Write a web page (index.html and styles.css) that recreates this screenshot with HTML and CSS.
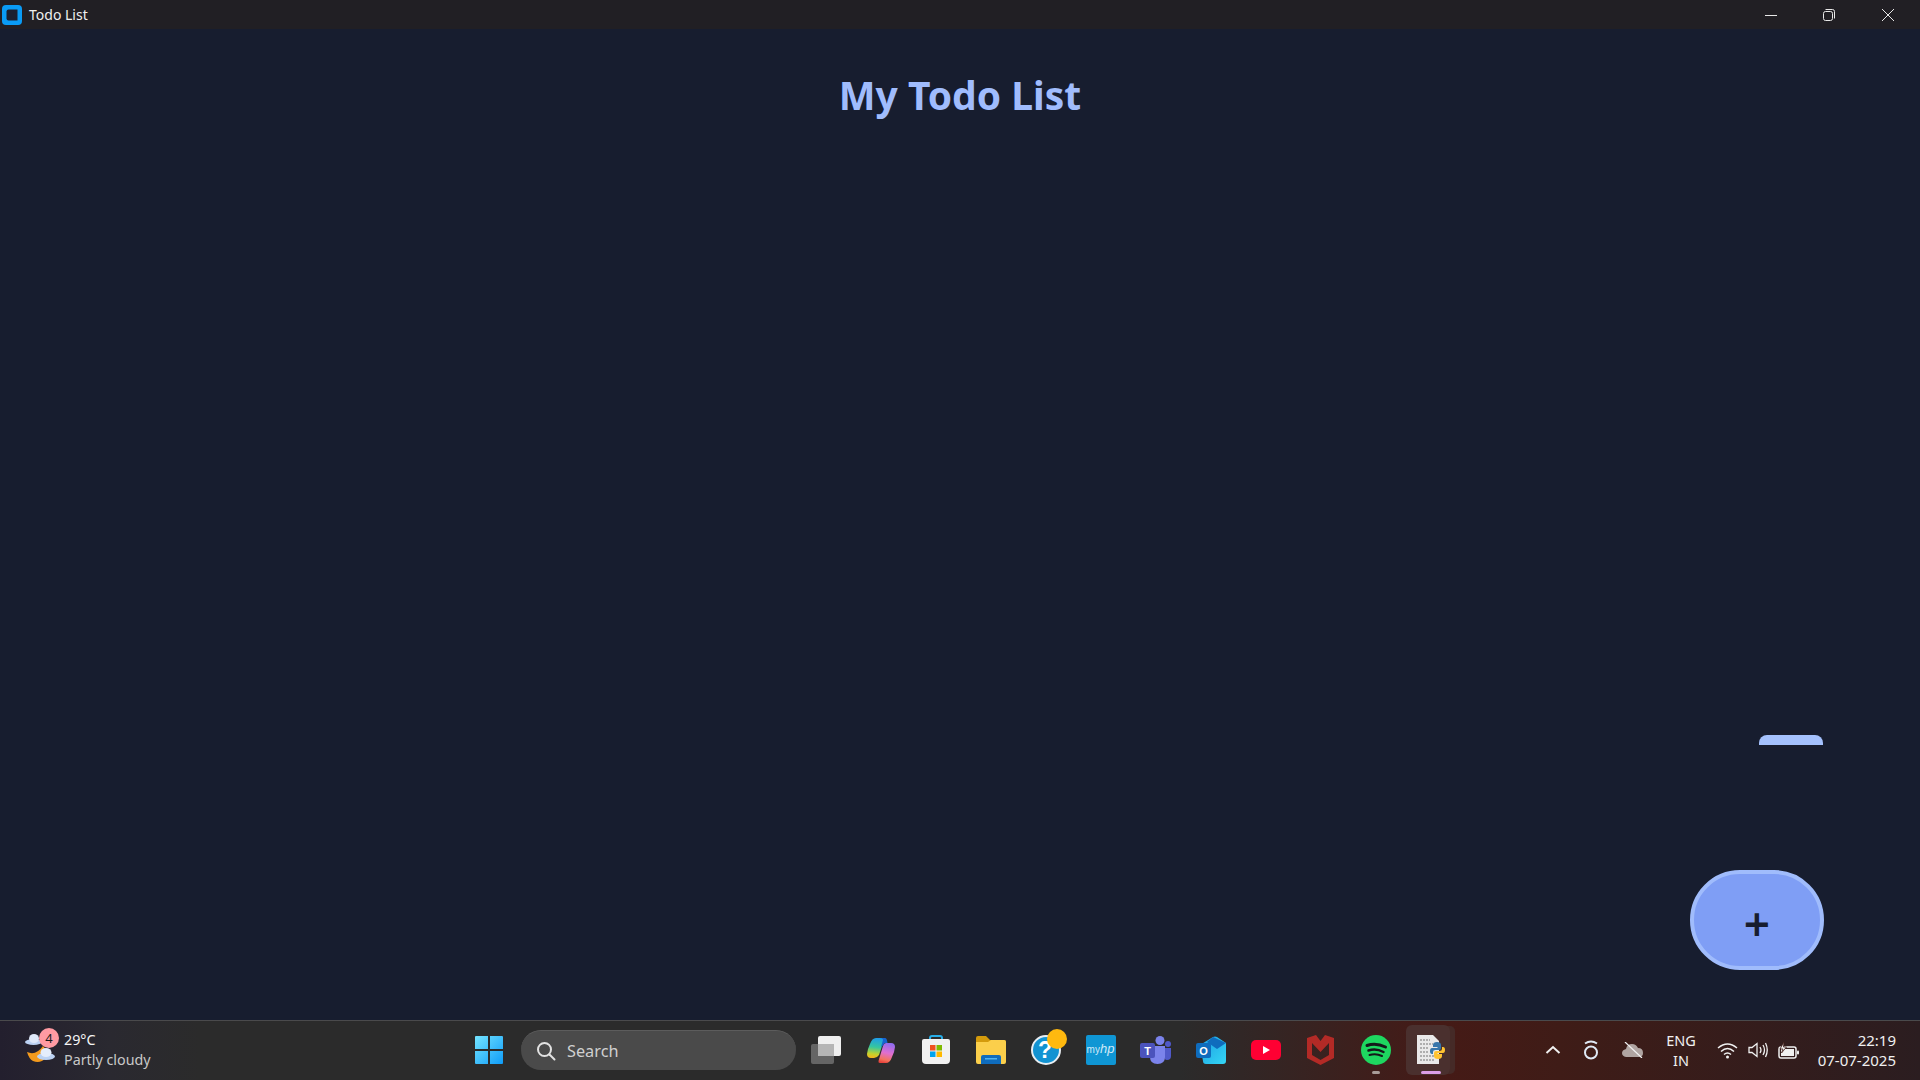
FILE: index.html
```html
<!DOCTYPE html>
<html lang="en">
<head>
<meta charset="utf-8">
<title>Todo List</title>
<link rel="stylesheet" href="styles.css">
</head>
<body>
<div class="window">
  <header class="titlebar">
    <div class="app-name">
      <svg class="app-icon" width="20" height="20" viewBox="0 0 20 20"><rect width="20" height="20" rx="4" fill="#0a9bf5"/><path d="M6.500 4.500H15.500V15.500H6.500Q4.500 15.500 4.500 13.500V6.500Q4.500 4.500 6.500 4.500Z" fill="#1c2030"/></svg>
      <span>Todo List</span>
    </div>
    <div class="win-controls">
      <button class="win-btn"><svg width="14" height="14" viewBox="0 0 14 14"><path d="M1 7.500H13" stroke="#e8e8e8" stroke-width="1"/></svg></button>
      <button class="win-btn"><svg width="14" height="14" viewBox="0 0 14 14" fill="none" stroke="#e8e8e8" stroke-width="1"><rect x="1.500" y="3.500" width="9" height="9" rx="2"/><path d="M3.500 1.500H10.500Q12.500 1.500 12.500 3.500V10.500"/></svg></button>
      <button class="win-btn"><svg width="14" height="14" viewBox="0 0 14 14"><path d="M1 1L13 13M13 1L1 13" stroke="#e8e8e8" stroke-width="1"/></svg></button>
    </div>
  </header>

  <main class="content">
    <h1 class="heading">My Todo List</h1>
    <div class="peek-tab"></div>
    <button class="fab">+</button>
  </main>

  <footer class="taskbar">
    <div class="weather">
      <div class="weather-icon">
        <svg width="34" height="36" viewBox="0 0 34 36">
          <path d="M3 20Q12 24 19 14Q25 20 22 26Q16 32 9 29Q5 27 3 20Z" fill="#f39a1d"/>
          <ellipse cx="9.500" cy="10" rx="8.500" ry="3" fill="#bcd2f3"/><ellipse cx="10" cy="6.500" rx="5" ry="4.500" fill="#dfe9fa"/>
          <ellipse cx="22" cy="24.500" rx="9" ry="3.500" fill="#bcd2f3"/><ellipse cx="22" cy="20.500" rx="5.500" ry="4.500" fill="#e5edfb"/>
        </svg>
        <span class="badge">4</span>
      </div>
      <div class="weather-text">
        <span class="temp">29°C</span>
        <span class="cond">Partly cloudy</span>
      </div>
    </div>

    <div class="center">
      <div class="slot">
        <svg width="30" height="30" viewBox="0 0 30 30">
          <defs>
            <linearGradient id="win" x1="0" y1="0" x2="1" y2="1"><stop offset="0" stop-color="#74e4ff"/><stop offset="1" stop-color="#0f9cf8"/></linearGradient>
          </defs>
          <path d="M1 2Q1 1 2 1H14V14H1ZM16 1H28Q29 1 29 2V14H16ZM1 16H14V29H2Q1 29 1 28ZM16 16H29V28Q29 29 28 29H16Z" fill="url(#win)"/>
        </svg>
      </div>
      <div class="search">
        <svg width="20" height="20" viewBox="0 0 20 20" fill="none" stroke="#e2e2e2" stroke-width="2"><circle cx="8.500" cy="8.500" r="6.500"/><path d="M13.500 13.500L18.500 18.500" stroke-linecap="round"/></svg>
        <span>Search</span>
      </div>
      <div class="slot">
        <svg width="32" height="30" viewBox="0 0 32 30"><rect x="8" y="1" width="23" height="20" rx="2" fill="#efefef"/><rect x="1" y="9" width="23" height="20" rx="2" fill="#707070" fill-opacity=".85"/><rect x="8" y="9" width="16" height="12" fill="#b5b5b5"/></svg>
      </div>
      <div class="slot">
        <svg width="28" height="25" viewBox="0 0 28 25">
          <defs>
            <linearGradient id="cop1" x1="0.500" y1="0" x2="0.400" y2="1"><stop offset="0" stop-color="#1f9ce8"/><stop offset=".45" stop-color="#35c6a0"/><stop offset=".8" stop-color="#c4d22c"/><stop offset="1" stop-color="#f6b51c"/></linearGradient>
            <linearGradient id="cop2" x1="0.600" y1="0" x2="0.400" y2="1"><stop offset="0" stop-color="#8f6cf0"/><stop offset=".5" stop-color="#e06fd0"/><stop offset=".85" stop-color="#f4735c"/><stop offset="1" stop-color="#e8433c"/></linearGradient>
          </defs>
          <path d="M9 0H15Q17.500 0 17 2L12 17Q10 20 7 20H4Q0 20 0 16Q.5 11 3 6Q5 0 9 0Z" fill="url(#cop1)"/>
          <path d="M13 0H18Q20 0 20.500 5H18Q17 5 16.500 7L14 9L16 2Q16 0 13 0Z" fill="#1763d0"/>
          <path d="M19 5H24Q28 5 28 9Q27.500 14 25 19Q23 25 19 25H13Q11 25 11.500 23L16 8Q17 5 19 5Z" fill="url(#cop2)"/>
        </svg>
      </div>
      <div class="slot">
        <svg width="30" height="30" viewBox="0 0 30 30">
          <path d="M9 6V3Q9 1 11 1H19Q21 1 21 3V6" fill="none" stroke="#27aee8" stroke-width="2"/>
          <path d="M1 6Q1 4 3 4H27Q29 4 29 6V25Q29 29 25 29H5Q1 29 1 25Z" fill="#f1f1f1"/>
          <rect x="9" y="10" width="5.500" height="5.500" fill="#f0511f"/><rect x="15.500" y="10" width="5.500" height="5.500" fill="#7fba00"/><rect x="9" y="16.500" width="5.500" height="5.500" fill="#00a4ef"/><rect x="15.500" y="16.500" width="5.500" height="5.500" fill="#ffb900"/>
        </svg>
      </div>
      <div class="slot">
        <svg width="30" height="28" viewBox="0 0 30 28">
          <path d="M0 2Q0 0 2 0H10L14 4H28Q30 4 30 6V8H0Z" fill="#d49b0c"/>
          <path d="M0 6H12L15 4H28Q30 4 30 6V26Q30 28 28 28H2Q0 28 0 26Z" fill="#fbcf4b"/>
          <path d="M5 28V21Q5 19 7 19H23Q25 19 25 21V28Z" fill="#0f6cbd"/><rect x="9" y="22" width="12" height="1.500" fill="#4fb4f2"/>
        </svg>
      </div>
      <div class="slot">
        <div class="help-wrap">
          <svg width="30" height="30" viewBox="0 0 30 30"><circle cx="15" cy="15" r="14" fill="#1293d2" stroke="#e8eef2" stroke-width="2"/><text x="14" y="23" text-anchor="middle" class="help-mark">?</text></svg>
          <span class="help-dot"></span>
        </div>
      </div>
      <div class="slot">
        <div class="myhp"><span class="my">my</span><span class="hp">hp</span></div>
      </div>
      <div class="slot">
        <svg width="32" height="28" viewBox="0 0 32 28">
          <circle cx="20" cy="4.500" r="4.500" fill="#7b83eb"/><circle cx="28" cy="8" r="3" fill="#5059c9"/>
          <path d="M24 12H31V20Q31 24 27 24Q24 24 24 20Z" fill="#5059c9"/>
          <path d="M10 10H25V21Q25 28 17.500 28Q10 28 10 21Z" fill="#7b83eb"/>
          <rect x="0" y="7" width="15" height="15" rx="2" fill="#4b53bc"/>
          <text x="7.500" y="19" text-anchor="middle" class="teams-t">T</text>
        </svg>
      </div>
      <div class="slot">
        <svg width="30" height="28" viewBox="0 0 30 28">
          <defs><linearGradient id="ol" x1="0" y1="0" x2="1" y2="1"><stop offset="0" stop-color="#1b9de2"/><stop offset="1" stop-color="#35d6f5"/></linearGradient></defs>
          <path d="M4 9L17 1Q19 0 21 1L30 7V25Q30 28 27 28H10Q7 28 7 25Z" fill="url(#ol)"/>
          <path d="M17 1L30 7L21 13L11 6Z" fill="#0f6cbd"/>
          <rect x="0" y="7" width="15" height="15" rx="2" fill="#0f6cbd"/>
          <text x="7.500" y="19" text-anchor="middle" class="teams-t">O</text>
        </svg>
      </div>
      <div class="slot">
        <svg width="30" height="20" viewBox="0 0 30 20"><rect width="30" height="20" rx="5" fill="#ff0033"/><path d="M12 6L19 10L12 14Z" fill="#fff"/></svg>
      </div>
      <div class="slot">
        <svg width="27" height="30" viewBox="0 0 27 30"><path fill-rule="evenodd" d="M0 3L9 0L13.500 6L18 0L27 3V23L13.500 30L0 23ZM5 8V20L13.500 25L22 20V8L13.500 17Z" fill="#b32a26"/></svg>
      </div>
      <div class="slot">
        <svg width="30" height="30" viewBox="0 0 30 30" fill="none" stroke="#14191a" stroke-linecap="round"><circle cx="15" cy="15" r="15" fill="#1ed760" stroke="none"/><path d="M6 10.500Q15 7.500 24.500 12" stroke-width="3"/><path d="M7.500 15.500Q15 13 22.500 17" stroke-width="2.500"/><path d="M8.500 20Q15 18 21 21" stroke-width="2"/></svg>
        <span class="run-dot"></span>
      </div>
      <div class="slot slot-active">
        <svg width="30" height="30" viewBox="0 0 30 30">
          <path d="M1 0H17L23 6V29H1Z" fill="#e9e9e9"/>
          <path d="M4 5H14M4 9H17M4 13H12M4 17H12M4 21H18M4 25H18" stroke="#9a9a9a" stroke-width="1.500" stroke-dasharray="2 1"/>
          <path d="M21 7Q17 7 17 10V12H21.500V13H16Q14 13 14 16Q14 19 16 19H17V17Q17 15 19.500 15H23Q25 15 25 13V10Q25 7 21 7Z" fill="#3776ab"/>
          <path d="M22 24Q26 24 26 21V19H21.500V18H27Q29 18 29 15Q29 12 27 12H26V14Q26 16 23.500 16H20Q18 16 18 18V21Q18 24 22 24Z" fill="#ffc331"/>
        </svg>
        <span class="run-bar"></span>
      </div>
    </div>

    <div class="tray">
      <svg class="tray-chevron" width="16" height="10" viewBox="0 0 16 10"><path d="M1.500 8L8 2L14.500 8" fill="none" stroke="#f0f0f0" stroke-width="2"/></svg>
      <svg class="tray-ring" width="16" height="20" viewBox="0 0 16 20" fill="none" stroke="#dfe9f5" stroke-width="2"><circle cx="8" cy="12.500" r="6"/><path d="M2 3.500Q8 -.5 14 3.500"/></svg>
      <svg class="tray-cloud" width="22" height="16" viewBox="0 0 22 16"><path d="M4 15Q0 14 0 11Q0 8 4 7Q5 2 10 2Q14 2 16 6Q21 6 21 11Q21 15 17 15Z" fill="#b0a5a2"/><path d="M3 0L20 16" stroke="#f2f2f2" stroke-width="1.200"/></svg>
      <div class="lang"><span>ENG</span><span>IN</span></div>
      <div class="tray-icons">
        <svg width="21" height="17" viewBox="0 0 21 17" fill="none" stroke="#f0f0f0" stroke-width="1.500"><path d="M1 6Q10.500 -2 20 6"/><path d="M4 9.500Q10.500 3.500 17 9.500"/><path d="M7 12.500Q10.500 9.500 14 12.500"/><circle cx="10.500" cy="15" r="1.500" fill="#f0f0f0" stroke="none"/></svg>
        <svg width="20" height="18" viewBox="0 0 20 18" fill="none" stroke="#f0f0f0" stroke-width="1.300"><path d="M1 6.500H4L9 2.500V15.500L4 11.500H1Z"/><path d="M12 6Q14 9 12 12"/><path d="M15 4Q18 9 15 14"/><path d="M17.500 2Q21 9 17.500 16" /></svg>
        <svg width="21" height="17" viewBox="0 0 21 17"><rect x="1" y="5" width="17" height="11" rx="2" fill="none" stroke="#f0f0f0" stroke-width="1.500"/><rect x="3" y="7" width="13" height="7" fill="#f0f0f0"/><rect x="19" y="8.500" width="2" height="4" rx="1" fill="#f0f0f0"/><path d="M6 0L2 7H5L3.500 11L8.500 5H5.500Z" fill="#f0f0f0" stroke="#3f1c17" stroke-width=".8"/></svg>
      </div>
      <div class="clock"><span>22:19</span><span>07-07-2025</span></div>
    </div>
  </footer>
</div>
</body>
</html>
```

FILE: styles.css
```css
* { box-sizing: border-box; }
html, body { margin: 0; height: 100%; }
body { font-family: "Noto Sans", "Open Sans", sans-serif; color: #fff; overflow: hidden; }

.window { width: 1920px; height: 1080px; display: flex; flex-direction: column; background: #171d2f; }

.titlebar { height: 29px; flex: none; display: flex; justify-content: space-between; align-items: center; background: #211f24; padding-left: 2px; }
.app-name { display: flex; align-items: center; gap: 7px; font-size: 14px; color: #f0f0f0; }
.app-icon { display: block; }
.win-controls { display: flex; padding-right: 3px; }
.win-btn { width: 58.500px; height: 29px; padding: 0; border: 0; background: transparent; display: flex; align-items: center; justify-content: center; }

.content { flex: 1; position: relative; padding-top: 41px; }
.heading { margin: 0; text-align: center; font-size: 39px; line-height: 50px; font-weight: 700; color: #a0bcfd; }
.peek-tab { position: absolute; left: 1759px; top: 706px; width: 64px; height: 10px; background: #a4c1fd; border-radius: 8px 8px 0 0; }
.fab { position: absolute; left: 1690px; top: 841px; width: 134px; height: 100px; border: 4px solid #a0bcfc; border-radius: 50px; background: #7f9ef5; color: #171d2f; font-family: "Noto Sans", sans-serif; font-size: 46px; font-weight: 600; line-height: 1; padding: 6px 0 0; }

.taskbar { height: 60px; flex: none; display: flex; align-items: center; padding-bottom: 1px; border-top: 1px solid #4a4a4c; background: linear-gradient(90deg, #231f2e 0, #2a2930 110px, #2b2b2b 200px, #2b2b2b 1180px, #451a16 1440px, #3f1c17 1560px, #2b1d20 1920px); }

.weather { width: 461px; flex: none; display: flex; align-items: center; padding-left: 24px; gap: 4px; }
.weather-icon { position: relative; width: 36px; height: 40px; display: flex; align-items: center; }
.badge { position: absolute; left: 15px; top: -2px; width: 20px; height: 20px; border-radius: 50%; background: #ff9aa2; color: #1a1a1a; font-size: 13px; line-height: 20px; text-align: center; }
.weather-text { display: flex; flex-direction: column; font-size: 14.300px; line-height: 20px; }
.temp { color: #f5f5f5; }
.cond { color: #c8c8c8; }

.center { display: flex; align-items: center; }
.slot { position: relative; width: 55px; height: 52px; flex: none; display: flex; align-items: center; justify-content: center; }
.search { width: 275px; height: 40px; margin: 0 2px 0 5px; flex: none; display: flex; align-items: center; gap: 11px; padding-left: 15px; border-radius: 20px; background: #4a4a4a; border-top: 1px solid #5c5c5c; color: #d0d0d0; font-size: 16.300px; }
.slot-active { width: 44px; height: 50px; margin: 0 8px 0 3px; padding-left: 6px; background: #4a302e; border-radius: 6px; box-shadow: 6px 0 0 -1px #452a27; }
.run-dot { position: absolute; left: 24px; bottom: 2px; width: 8px; height: 3px; border-radius: 2px; background: #a89c99; }
.run-bar { position: absolute; left: 15px; bottom: 1px; width: 20px; height: 3px; border-radius: 2px; background: #dc9ee6; }

.help-wrap { position: relative; width: 30px; height: 30px; display: flex; }
.help-mark { font-family: "Liberation Sans", sans-serif; font-size: 23px; font-weight: 700; fill: #fff; }
.help-dot { position: absolute; left: 16px; top: -6px; width: 20px; height: 20px; border-radius: 50%; background: #ffb90f; }
.myhp { width: 30px; height: 30px; border-radius: 2px; background: #0f96d4; color: #cfeaf7; display: flex; align-items: baseline; justify-content: center; padding-top: 7px; font-size: 10px; line-height: 14px; }
.my { font-family: "Liberation Sans", sans-serif; }
.hp { font-family: "Liberation Sans", sans-serif; font-style: italic; font-size: 13px; }
.teams-t { font-family: "Liberation Sans", sans-serif; font-size: 11px; font-weight: 700; fill: #fff; }

.tray { flex: 1; display: flex; align-items: center; padding-left: 87px; height: 100%; }
.tray-chevron { flex: none; margin-right: 22px; }
.tray-ring { flex: none; margin-right: 23px; }
.tray-cloud { flex: none; margin-right: 13px; }
.lang { width: 48px; display: flex; flex-direction: column; align-items: center; font-size: 14.500px; line-height: 20px; color: #f0f0f0; }
.tray-icons { display: flex; align-items: center; gap: 10px; margin-left: 12px; }
.clock { margin-left: auto; padding-right: 24px; display: flex; flex-direction: column; align-items: flex-end; font-size: 15px; line-height: 20px; color: #f0f0f0; }
```
